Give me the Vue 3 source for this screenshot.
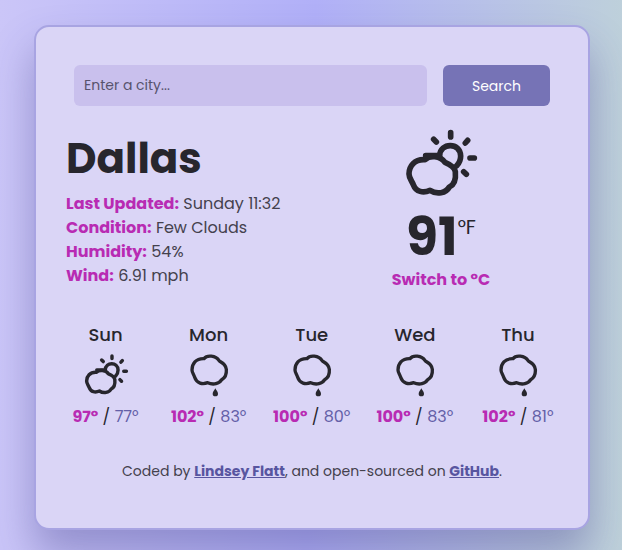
<script setup>
const details = [
  { label: 'Last Updated:', value: 'Sunday 11:32', key: 'updated' },
  { label: 'Condition:', value: 'Few Clouds', key: 'condition' },
  { label: 'Humidity:', value: '54%', key: 'humidity' },
  { label: 'Wind:', value: '6.91 mph', key: 'wind' },
]
const days = [
  { name: 'Sun', icon: 'sun', high: 97, low: 77 },
  { name: 'Mon', icon: 'rain', high: 102, low: 83 },
  { name: 'Tue', icon: 'rain', high: 100, low: 80 },
  { name: 'Wed', icon: 'rain', high: 100, low: 83 },
  { name: 'Thu', icon: 'rain', high: 102, low: 81 },
]
</script>

<template>
  <main class="page">
    <section class="card">
      <form class="search" @submit.prevent>
        <input class="city-input" type="text" placeholder="Enter a city..." />
        <button class="search-button" type="submit">Search</button>
      </form>

      <div class="current">
        <div class="info">
          <h1>Dallas</h1>
          <ul>
            <li v-for="d in details" :key="d.key" :class="d.key">
              <strong>{{ d.label }}</strong><span>{{ d.value }}</span>
            </li>
          </ul>
        </div>
        <div class="now">
          <svg class="now-icon" viewBox="0 0 330 270">
            <use href="#partly-cloudy" />
          </svg>
          <div class="temperature"><strong>91</strong><span>°F</span></div>
          <a class="switch">Switch to °C</a>
        </div>
      </div>

      <div class="forecast">
        <div v-for="day in days" :key="day.name" class="day">
          <div class="day-name">{{ day.name }}</div>
          <svg v-if="day.icon === 'sun'" class="day-icon" viewBox="34.2 13.8 236.6 236.6">
            <g id="partly-cloudy" fill="none" stroke="#27262d" stroke-width="17" stroke-linecap="round" stroke-linejoin="round">
              <path d="M105 119C73 117 57 139 57 162C57 175 66 183 70 194C78 216 100 220 120 211C141 225 168 219 178 201C193 194 198 176 196 155C194 140 177 132 165 127C151 107 119 105 105 119Z" />
              <path d="M107 107H149C150 68 211 65 212 108Q212 125 200 137" />
              <path d="M182 38V51M131 58L139 66M233 61L226 69M240 114H253M221 155L229 163" />
            </g>
          </svg>
          <svg v-else class="day-icon" viewBox="375 108 144 144">
            <path d="M432 131C407 130 396 147 396 165C396 173 402 179 404 187C410 206 428 209 443 203C460 211 478 206 485 194C496 188 500 176 499 163C498 149 487 143 478 138C467 120 440 120 432 131Z" fill="none" stroke="#27262d" stroke-width="10" stroke-linejoin="round" />
            <path d="M466 220C463 226 458 231 458 236A8 8 0 0 0 474 236C474 231 469 226 466 220Z" fill="#27262d" />
          </svg>
          <div class="range"><strong>{{ day.high }}°</strong><i>/</i><span>{{ day.low }}°</span></div>
        </div>
      </div>

      <footer>Coded by <a>Lindsey Flatt</a>, and open-sourced on <a>GitHub</a>.</footer>
    </section>
  </main>
</template>

<style>
body {
  margin: 0;
}
</style>

<style scoped>
* {
  box-sizing: border-box;
}
.page {
  height: 550px;
  overflow: hidden;
  padding: 25px 32px 20px 34px;
  background: linear-gradient(91deg, #cbc6f8 0%, #b1b0f8 50%, #bed1da 100%);
  font-family: Poppins, Inter, sans-serif;
  color: #27262d;
}
.card {
  width: 556px;
  height: 505px;
  padding: 38px 16px 0 18px;
  border: 2px solid #a8a4e2;
  border-radius: 15px;
  background: #dad5f6;
  box-shadow: 0 24px 40px rgba(65, 60, 130, 0.36);
}
.search {
  display: flex;
  gap: 16px;
  padding-left: 20px;
  height: 41px;
}
.city-input,
.search-button {
  height: 41px;
  border: 0;
  border-radius: 6px;
  font: 14px Poppins, Inter, sans-serif;
}
.city-input {
  width: 353px;
  padding: 0 10px;
  background: #c9c0ed;
}
.city-input::placeholder {
  color: #57536c;
}
.search-button {
  width: 107px;
  padding: 1px 0 0;
  background: #7673b6;
  color: #fff;
}
.current {
  display: flex;
  height: 212px;
}
.info {
  width: 278px;
  padding: 28px 0 0 12px;
}
h1 {
  margin: 0;
  font-size: 42px;
  font-weight: 700;
  line-height: 50px;
}
ul {
  margin: 8px 0 0;
  padding: 0;
  list-style: none;
}
li {
  display: flex;
  gap: 4.4px;
  height: 24px;
  font-size: 16px;
  line-height: 24px;
  white-space: nowrap;
}
li strong,
.switch,
.range strong {
  color: #b82bb3;
}
li span {
  color: #44414d;
  font-weight: 400;
}
.now {
  display: flex;
  width: 220px;
  flex-direction: column;
  align-items: center;
  padding-top: 14px;
  margin-left: -1px;
}
.now-icon {
  flex: none;
  width: 110px;
  height: 90px;
  margin-left: 8px;
}
.temperature {
  display: flex;
  height: 56px;
  align-items: flex-start;
  line-height: 54px;
}
.temperature strong {
  font-size: 52px;
}
.temperature span {
  padding-top: 2px;
  font-size: 20px;
  line-height: 30px;
}
.switch {
  margin-top: 2px;
  font-size: 16px;
  font-weight: 700;
  line-height: 24px;
}
.forecast {
  display: grid;
  grid-template-columns: repeat(5, 103.1px);
}
.day {
  display: flex;
  flex-direction: column;
  align-items: center;
}
.day-name {
  height: 33px;
  padding-top: 4px;
  font-size: 18px;
  font-weight: 500;
  line-height: 26px;
}
.day-icon {
  width: 48px;
  height: 48px;
}
.range {
  display: flex;
  gap: 4.4px;
  margin-top: 6px;
  font-size: 16px;
  line-height: 24px;
}
.range i {
  font-style: normal;
}
.range span {
  color: #6460a8;
  font-weight: 400;
}
footer {
  margin: 31px 2px 0 0;
  font-size: 14px;
  line-height: 22px;
  text-align: center;
  color: #44414d;
  white-space: nowrap;
}
footer a {
  color: #5855a0;
  font-weight: 700;
  text-decoration: underline;
}
</style>
